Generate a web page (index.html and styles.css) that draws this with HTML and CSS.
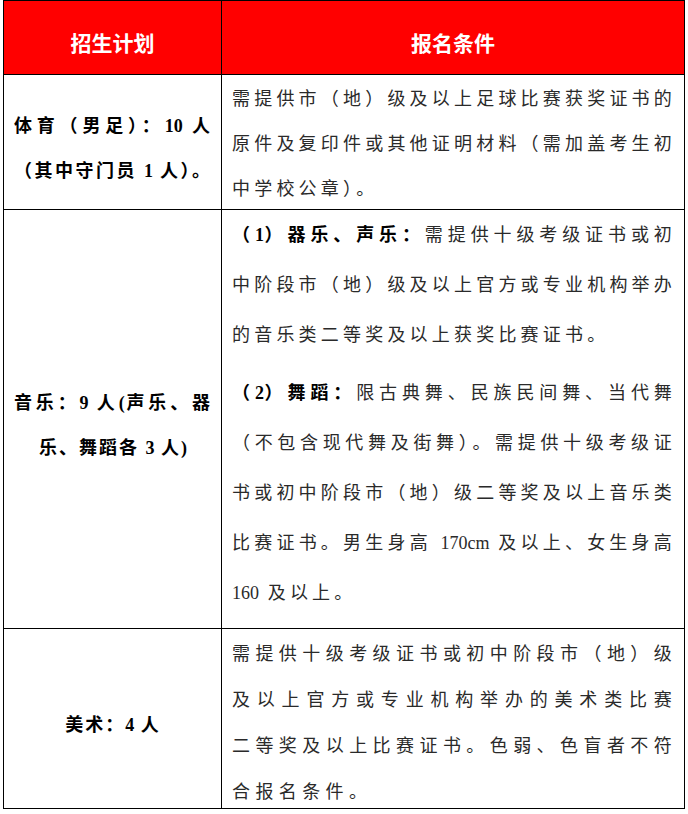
FILE: index.html
```html
<!DOCTYPE html>
<html lang="zh-CN">
<head>
<meta charset="utf-8">
<title>招生计划</title>
<link rel="stylesheet" href="styles.css">
</head>
<body>
<table class="plan-table">
  <colgroup><col class="col-plan"><col class="col-req"></colgroup>
  <thead>
    <tr class="row-head"><th>招生计划</th><th>报名条件</th></tr>
  </thead>
  <tbody>
    <tr class="row-1">
      <td class="quota">
        <div class="quota-body">
          <div class="q-ln fill">体育（男足）：<span class="num">10</span> 人</div>
          <div class="q-ln fill">（其中守门员 <span class="num">1</span> 人）。</div>
        </div>
      </td>
      <td class="req">
        <div class="req-body">
          <div class="ln fill">需提供市（地）级及以上足球比赛获奖证书的</div>
          <div class="ln fill">原件及复印件或其他证明材料（需加盖考生初</div>
          <div class="ln">中学校公章）。</div>
        </div>
      </td>
    </tr>
    <tr class="row-2">
      <td class="quota">
        <div class="quota-body">
          <div class="q-ln fill">音乐：<span class="num">9</span> 人<span class="num">(</span>声乐、器</div>
          <div class="q-ln">乐、舞蹈各 <span class="num">3</span> 人<span class="num">)</span></div>
        </div>
      </td>
      <td class="req">
        <div class="req-body">
          <div class="para">
            <div class="ln fill"><b>（<span class="num">1</span>）器乐、声乐：</b>需提供十级考级证书或初</div>
            <div class="ln fill">中阶段市（地）级及以上官方或专业机构举办</div>
            <div class="ln">的音乐类二等奖及以上获奖比赛证书。</div>
          </div>
          <div class="para">
            <div class="ln fill"><b>（<span class="num">2</span>）舞蹈：</b>限古典舞、民族民间舞、当代舞</div>
            <div class="ln fill">（不包含现代舞及街舞）。需提供十级考级证</div>
            <div class="ln fill">书或初中阶段市（地）级二等奖及以上音乐类</div>
            <div class="ln fill">比赛证书。男生身高 <span class="num">170cm</span> 及以上、女生身高</div>
            <div class="ln"><span class="num">160</span> 及以上。</div>
          </div>
        </div>
      </td>
    </tr>
    <tr class="row-3">
      <td class="quota">
        <div class="quota-body">
          <div class="q-ln">美术：<span class="num">4</span> 人</div>
        </div>
      </td>
      <td class="req">
        <div class="req-body">
          <div class="ln fill">需提供十级考级证书或初中阶段市（地）级</div>
          <div class="ln fill">及以上官方或专业机构举办的美术类比赛</div>
          <div class="ln fill">二等奖及以上比赛证书。色弱、色盲者不符</div>
          <div class="ln wide">合报名条件。</div>
        </div>
      </td>
    </tr>
  </tbody>
</table>
</body>
</html>
```

FILE: styles.css
```css
html, body {
  margin: 0;
  padding: 0;
  background: #ffffff;
}
body {
  padding-left: 3px;
  font-family: "Liberation Serif", "Noto Sans CJK SC", serif;
}
.plan-table {
  border-collapse: collapse;
  table-layout: fixed;
  width: 681px;
}
.col-plan { width: 218px; }
.col-req { width: 463px; }
.plan-table th,
.plan-table td {
  border: 1px solid #000;
  padding: 0;
}
.row-head th {
  height: 65px;
  background: #ff0000;
  color: #ffffff;
  font-family: "Noto Sans CJK SC", sans-serif;
  font-weight: 700;
  font-size: 21px;
  padding-top: 8px;
  text-align: center;
  vertical-align: middle;
}
.row-1 td { height: 134px; }
.row-2 td { height: 418px; }
.row-3 td { height: 179px; }

.quota {
  vertical-align: middle;
  padding: 0 9px 0 10px !important;
  text-align: center;
  color: #000;
  font-weight: 700;
  font-size: 18px;
  letter-spacing: 2px;
}
.quota-body {
  padding-top: 13px;
}
.q-ln {
  line-height: 45px;
  white-space: nowrap;
}
.fill {
  text-align: justify;
  text-align-last: justify;
}
.num {
  letter-spacing: 0;
}
.quota .num { font-weight: 700; }

.req {
  vertical-align: top;
  padding: 0 8px 0 10px !important;
  color: #2a2a2a;
  font-size: 18px;
  font-weight: 400;
  letter-spacing: 4.2px;
}
.req b {
  color: #000;
  font-weight: 700;
}
.ln {
  white-space: nowrap;
  text-align: left;
}
.ln.fill {
  text-align: justify;
  text-align-last: justify;
}
.ln.wide { letter-spacing: 5.4px; }

.row-1 .req-body {
  padding-top: 2px;
  margin-bottom: -4px;
}
.row-1 .ln { line-height: 45px; }

.row-2 .req-body { padding-top: 0; }
.row-2 .ln { line-height: 50px; }
.row-2 .para + .para { margin-top: 8px; }

.row-3 .req-body {
  padding-top: 2px;
  margin-bottom: -8px;
}
.row-3 .ln { line-height: 46px; }
```
